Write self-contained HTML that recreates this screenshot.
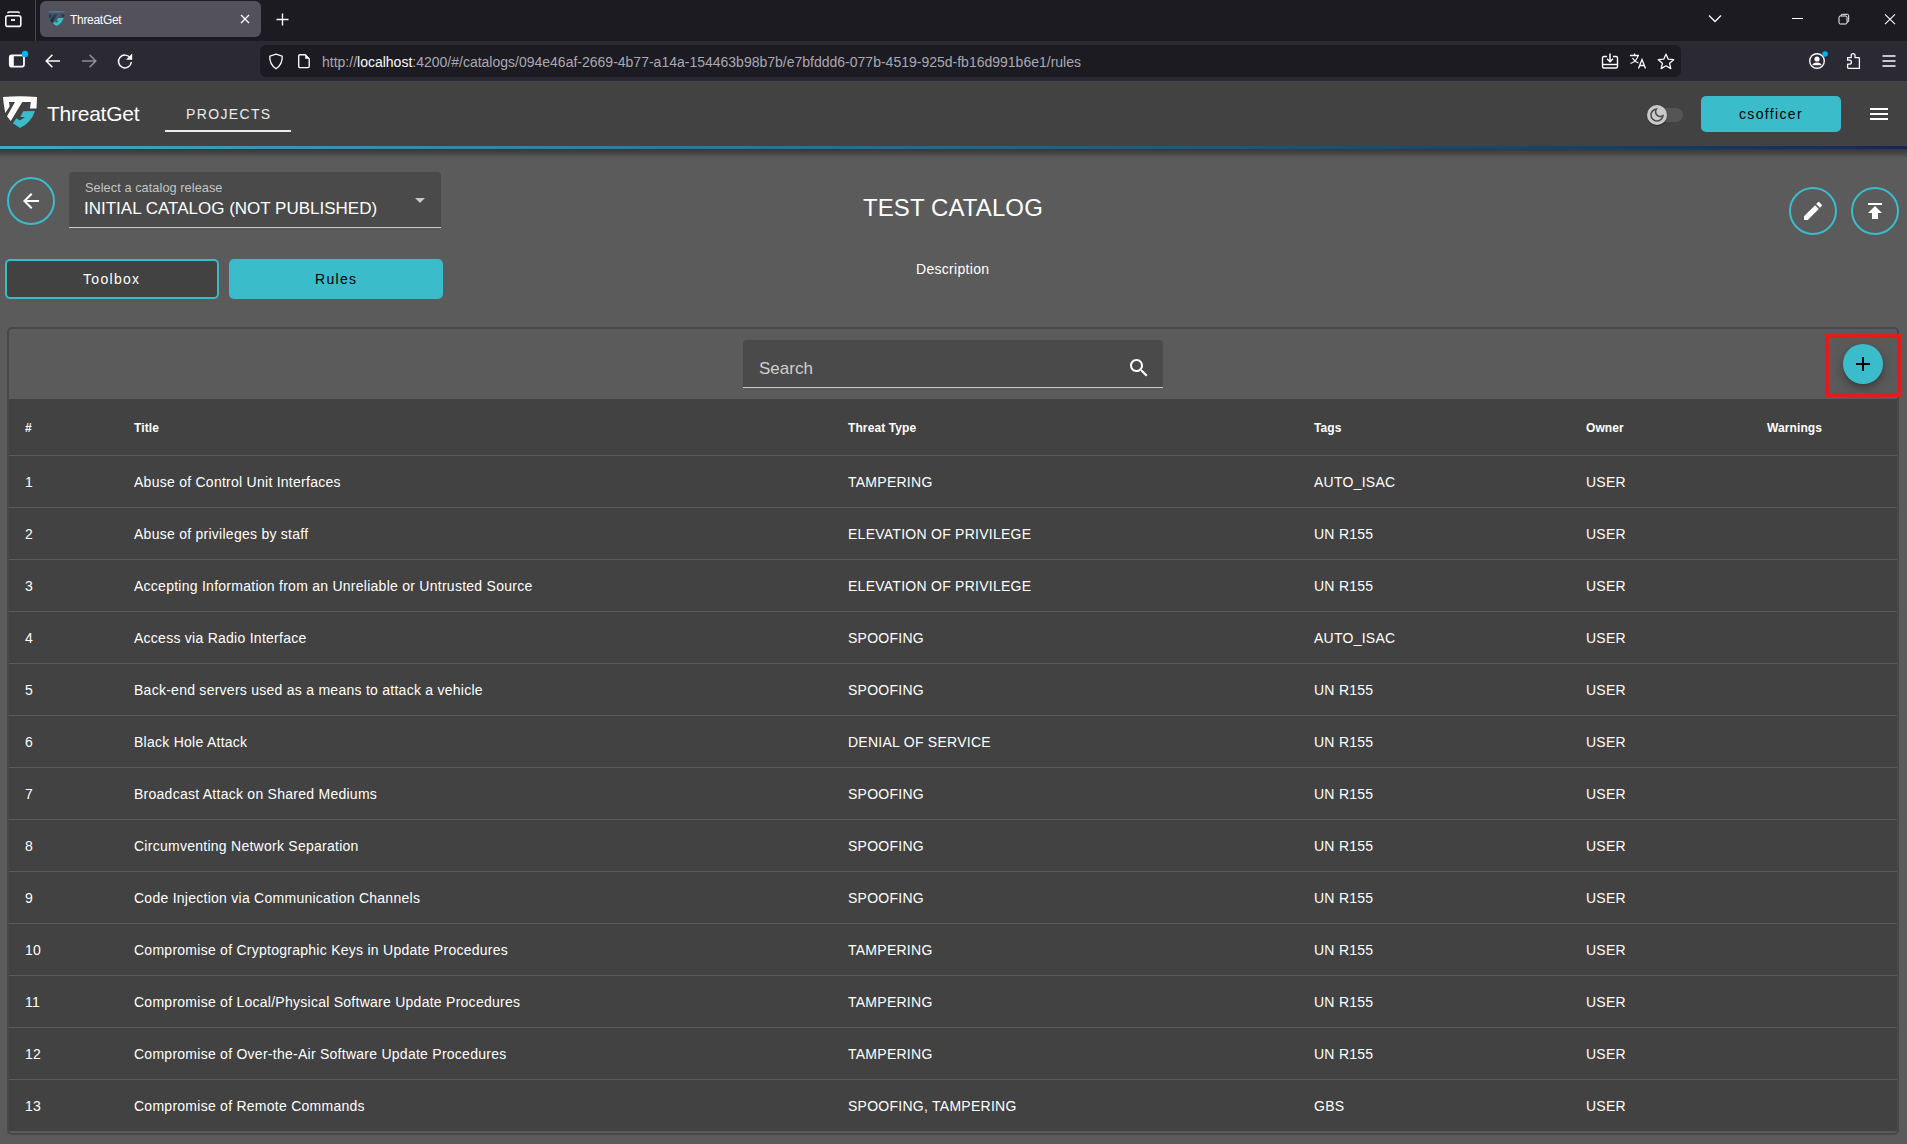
<!DOCTYPE html>
<html><head><meta charset="utf-8">
<style>
*{box-sizing:border-box;margin:0;padding:0}
html,body{width:1907px;height:1144px;overflow:hidden;background:#5b5b5b;font-family:"Liberation Sans",sans-serif;color:#fff}
.abs{position:absolute}
.t{position:absolute;white-space:pre;line-height:1}
svg{position:absolute;overflow:visible}
#tabs{left:0;top:0;width:1907px;height:41px;background:#1c1b22}
#toolbar{left:0;top:41px;width:1907px;height:40px;background:#2b2a33}
#appbar{left:0;top:81px;width:1907px;height:65px;background:#424242}
#gline{left:0;top:146px;width:1907px;height:3px;background:linear-gradient(90deg,#3aabc6,#276782 50%,#152b48)}
#gshadow{left:0;top:149px;width:1907px;height:9px;background:linear-gradient(#363636,#5b5b5b)}
.cbtn{position:absolute;width:48px;height:48px;border:2px solid #3bbccb;border-radius:50%}
#card{left:7px;top:327px;width:1892px;height:808px;border:2px solid #484848;border-radius:5px;overflow:hidden}
#thead{left:0;top:70px;width:1888px;height:57px;background:#424242;border-bottom:1px solid #5a5a5a}
.row{position:absolute;left:0;width:1888px;height:52px;background:#424242;border-bottom:1px solid #5a5a5a;font-size:14px;letter-spacing:0.26px}
.row span,#thead span{position:absolute;white-space:pre;line-height:1;top:19px}
#thead span{font-size:12px;font-weight:bold;top:23px;letter-spacing:0.1px}
.c0{left:16px}.c1{left:125px}.c2{left:839px}.c3{left:1305px}.c4{left:1577px}.c5{left:1758px}
</style></head><body>
<div id="tabs" class="abs"></div>
<div id="toolbar" class="abs"></div>
<div id="appbar" class="abs"></div>
<div id="gline" class="abs"></div>
<div id="gshadow" class="abs"></div>
<!-- tab strip -->
<svg style="left:0;top:0" width="36" height="41" viewBox="0 0 36 41"><g fill="none" stroke="#fbfbfe" stroke-width="1.6"><path d="M7.8 13.2 Q7.8 12 9 12 H18 Q19.2 12 19.2 13.2"/><rect x="5.8" y="15.8" width="15" height="10.6" rx="2"/><path d="M11 20h4" stroke-width="1.8"/></g></svg>
<div class="abs" style="left:35px;top:0;width:1px;height:41px;background:#4b4a52"></div>
<div class="abs" style="left:40px;top:1px;width:221px;height:36px;background:#52515c;border-radius:6px"></div>
<svg style="left:46.6px;top:9.2px" width="19" height="19" viewBox="0 0 40 40"><defs><linearGradient id="fg" x1="0" y1="0" x2="0" y2="1"><stop offset="0" stop-color="#6b7f94"/><stop offset=".35" stop-color="#1f3d5c"/><stop offset="1" stop-color="#10283f"/></linearGradient></defs><path fill="url(#fg)" d="M3 5 Q20 3.3 37 5 L36.5 16.5 L30 16.5 L30.8 10 L22.3 10 L10.8 29 L7 24.3 L15 10 L9 10 L9.6 14.5 L5.3 21 Q3.5 12 3 5Z"/><path fill="#3bbccb" d="M23.3 19.2 L35 19 Q31 31 20 36 L13 31.3 L16.3 26.3 L19.8 28.6 L25 25.3 L20.3 24.8Z"/></svg>
<div class="t" style="left:70px;top:14px;font-size:12px;letter-spacing:-0.3px;color:#fbfbfe">ThreatGet</div>
<svg style="left:240px;top:14px" width="10" height="10" viewBox="0 0 10 10"><path d="M1 1L9 9M9 1L1 9" stroke="#fbfbfe" stroke-width="1.4"/></svg>
<svg style="left:276px;top:13px" width="13" height="13" viewBox="0 0 13 13"><path d="M6.5 0.5v12M0.5 6.5h12" stroke="#fbfbfe" stroke-width="1.4"/></svg>
<svg style="left:1708px;top:14px" width="14" height="9" viewBox="0 0 14 9"><path d="M1 1.5l6 6 6-6" fill="none" stroke="#fbfbfe" stroke-width="1.3"/></svg>
<div class="abs" style="left:1792px;top:18px;width:11px;height:1px;background:#fbfbfe"></div>
<svg style="left:1838px;top:13px" width="12" height="12" viewBox="0 0 12 12"><g fill="none" stroke="#fbfbfe" stroke-width="1"><rect x="1" y="3" width="8" height="8" rx="1.3"/><path d="M3 3 V2.6 Q3 1.3 4.3 1.3 H9.4 Q10.7 1.3 10.7 2.6 V7.7 Q10.7 9 9.4 9 H9"/></g></svg>
<svg style="left:1884px;top:14px" width="12" height="11" viewBox="0 0 12 11"><path d="M1 0.3L11 10.2M11 0.3L1 10.2" stroke="#fbfbfe" stroke-width="1.1"/></svg>
<!-- toolbar -->
<svg style="left:8px;top:50px" width="22" height="20" viewBox="0 0 22 20"><rect x="1.8" y="5.4" width="14.2" height="11.2" rx="2" fill="none" stroke="#fbfbfe" stroke-width="1.8"/><rect x="1.4" y="5" width="4.4" height="12" rx="1.5" fill="#fbfbfe"/><circle cx="17" cy="4" r="3.2" fill="#00b3f4"/></svg>
<svg style="left:45px;top:53px" width="16" height="16" viewBox="0 0 16 16"><path d="M15 8H1.6M7.4 1.8L1.2 8l6.2 6.2" fill="none" stroke="#fbfbfe" stroke-width="1.5"/></svg>
<svg style="left:81px;top:53px" width="16" height="16" viewBox="0 0 16 16"><path d="M1 8h13.4M8.6 1.8L14.8 8l-6.2 6.2" fill="none" stroke="#8f8f9d" stroke-width="1.5"/></svg>
<svg style="left:117px;top:53px" width="16" height="16" viewBox="0 0 16 16"><path d="M13.4 5.2A6.4 6.4 0 1 0 14.3 9" fill="none" stroke="#fbfbfe" stroke-width="1.5"/><path d="M15.2 0.6V6.8H9Z" fill="#fbfbfe"/></svg>
<div class="abs" style="left:260px;top:45px;width:1421px;height:32px;background:#1c1b22;border-radius:6px"></div>
<svg style="left:268px;top:53px" width="16" height="17" viewBox="0 0 16 17"><path d="M8 1.2 L14.2 3.2 Q14.6 11.2 8 15.8 Q1.4 11.2 1.8 3.2Z" fill="none" stroke="#fbfbfe" stroke-width="1.3"/></svg>
<svg style="left:297px;top:53px" width="14" height="16" viewBox="0 0 14 16"><path d="M3 1.7h5.2l4 4v7.6q0 1.3-1.3 1.3H3Q1.7 14.6 1.7 13.3V3Q1.7 1.7 3 1.7z" fill="none" stroke="#fbfbfe" stroke-width="1.35"/><path d="M8.2 1.2V5.7H12.7Z" fill="#fbfbfe"/></svg>
<div class="t" style="left:322px;top:55px;font-size:14px;color:#a9a9b3">http://<span style="color:#fbfbfe">localhost</span>:4200/#/catalogs/094e46af-2669-4b77-a14a-154463b98b7b/e7bfddd6-077b-4519-925d-fb16d991b6e1/rules</div>
<svg style="left:1601px;top:53px" width="18" height="16" viewBox="0 0 18 16"><path d="M6 3.5H3Q1.5 3.5 1.5 5v8.5Q1.5 15 3 15h12q1.5 0 1.5-1.5V5Q16.5 3.5 15 3.5h-3" fill="none" stroke="#fbfbfe" stroke-width="1.4"/><path d="M1.5 11.5h15" stroke="#fbfbfe" stroke-width="1.4"/><path d="M9 0.5v8M6 5.8l3 3 3-3" fill="none" stroke="#fbfbfe" stroke-width="1.5"/></svg>
<svg style="left:1629px;top:53px" width="18" height="16" viewBox="0 0 18 16"><path d="M1 2.5h9M5.5 0.5v2M9 2.5Q8 8 1.5 10.5M3.5 5Q6 9 9.5 10" fill="none" stroke="#fbfbfe" stroke-width="1.3"/><path d="M9.5 15.5L13 6.5l3.5 9M10.7 12.5h4.6" fill="none" stroke="#fbfbfe" stroke-width="1.3"/></svg>
<svg style="left:1657px;top:53px" width="18" height="17" viewBox="0 0 18 17"><path d="M9 1.2l2.3 5 5.4.5-4.1 3.6 1.2 5.3L9 12.8l-4.8 2.8 1.2-5.3L1.3 6.7l5.4-.5z" fill="none" stroke="#fbfbfe" stroke-width="1.3" stroke-linejoin="round"/></svg>
<svg style="left:1808px;top:50px" width="22" height="20" viewBox="0 0 22 20"><circle cx="9" cy="11" r="7.3" fill="none" stroke="#fbfbfe" stroke-width="1.4"/><circle cx="9" cy="9" r="2.6" fill="#fbfbfe"/><path d="M4.3 15.3Q5 12.6 9 12.6T13.7 15.3Z" fill="#fbfbfe"/><circle cx="17" cy="4" r="2.8" fill="#00b3f4"/></svg>
<svg style="left:1845px;top:52px" width="17" height="18" viewBox="0 0 17 18"><path d="M2.6 5.6H6.2V3.6A1.9 1.9 0 0 1 10 3.6V5.6H13.6Q14.4 5.6 14.4 6.4V16.4H3.4Q2.6 16.4 2.6 15.6V12.2H4.4A2 2 0 0 0 4.4 8.2H2.6Z" fill="none" stroke="#fbfbfe" stroke-width="1.3" stroke-linejoin="round"/></svg>
<svg style="left:1882px;top:55px" width="14" height="12" viewBox="0 0 14 12"><path d="M0.5 1h13M0.5 6h13M0.5 11h13" stroke="#fbfbfe" stroke-width="1.4"/></svg>
<!-- app bar -->
<svg style="left:0;top:92px" width="40" height="40" viewBox="0 0 40 40"><path fill="#fff" d="M3 5 Q20 3.3 37 5 L36.5 16.5 L30 16.5 L30.8 10 L22.3 10 L10.8 29 L7 24.3 L15 10 L9 10 L9.6 14.5 L5.3 21 Q3.5 12 3 5Z"/><path fill="#3bbccb" d="M23.3 19.2 L35 19 Q31 31 20 36 L13 31.3 L16.3 26.3 L19.8 28.6 L25 25.3 L20.3 24.8Z"/></svg>
<div class="t" style="left:47px;top:103px;font-size:21px;letter-spacing:-0.25px;color:#fff">ThreatGet</div>
<div class="t" style="left:186px;top:107px;font-size:14px;letter-spacing:1.35px;color:#ececec">PROJECTS</div>
<div class="abs" style="left:165px;top:130px;width:126px;height:2px;background:#ececec"></div>
<div class="abs" style="left:1650px;top:108px;width:33px;height:14px;border-radius:7px;background:#555"></div>
<div class="abs" style="left:1647px;top:105px;width:20px;height:20px;border-radius:50%;background:#c9c9c9;box-shadow:0 2px 1px -1px rgba(0,0,0,.2),0 1px 1px 0 rgba(0,0,0,.14),0 1px 3px 0 rgba(0,0,0,.12)"></div>
<svg style="left:1648px;top:106px" width="18" height="18" viewBox="0 0 24 24"><path fill="#4a4a4a" d="M9.37 5.51c-.18.64-.27 1.310-.27 1.99 0 4.08 3.32 7.4 7.4 7.4.68 0 1.35-.09 1.99-.27C17.45 17.19 14.93 19 12 19c-3.86 0-7-3.14-7-7 0-2.930 1.81-5.45 4.37-6.49zM12 3c-4.97 0-9 4.03-9 9s4.03 9 9 9 9-4.03 9-9c0-.46-.04-.92-.1-1.36-.98 1.37-2.58 2.26-4.4 2.26-2.98 0-5.4-2.42-5.4-5.4 0-1.810.89-3.42 2.26-4.4-.44-.06-.9-.1-1.36-.1z"/></svg>
<div class="abs" style="left:1701px;top:96px;width:140px;height:36px;border-radius:5px;background:#3bbccb"></div>
<div class="t" style="left:1739px;top:107px;font-size:14px;letter-spacing:1.35px;color:#000">csofficer</div>
<svg style="left:1867px;top:102px" width="24" height="24" viewBox="0 0 24 24"><path fill="#fff" d="M3 18h18v-2H3v2zm0-5h18v-2H3v2zm0-7v2h18V6H3z"/></svg>

<!-- page header -->
<div class="cbtn" style="left:7px;top:177px"></div>
<svg style="left:19px;top:189px" width="24" height="24" viewBox="0 0 24 24"><path fill="#fff" d="M20 11H7.83l5.59-5.59L12 4l-8 8 8 8 1.41-1.41L7.83 13H20v-2z"/></svg>
<div class="abs" style="left:69px;top:172px;width:372px;height:56px;background:#4a4a4a;border-radius:4px 4px 0 0;border-bottom:1px solid #c8c8c8"></div>
<div class="t" style="left:85px;top:182px;font-size:12.75px;letter-spacing:0.06px;color:#c4c4c4">Select a catalog release</div>
<div class="t" style="left:84px;top:200px;font-size:17px;color:#fff">INITIAL CATALOG (NOT PUBLISHED)</div>
<div class="abs" style="left:415px;top:198px;width:0;height:0;border-left:5px solid transparent;border-right:5px solid transparent;border-top:5px solid #c8c8c8"></div>
<div class="t" style="left:863px;top:196px;font-size:24px;letter-spacing:0.1px">TEST CATALOG</div>
<div class="t" style="left:916px;top:262px;font-size:14px;letter-spacing:0.3px">Description</div>
<div class="cbtn" style="left:1789px;top:187px"></div>
<svg style="left:1801px;top:199px" width="24" height="24" viewBox="0 0 24 24"><path fill="#fff" d="M3 17.25V21h3.75L17.81 9.94l-3.75-3.75L3 17.25zM20.71 7.04c.39-.39.39-1.02 0-1.41l-2.34-2.34c-.39-.39-1.02-.39-1.41 0l-1.83 1.83 3.75 3.75 1.83-1.83z"/></svg>
<div class="cbtn" style="left:1851px;top:187px"></div>
<svg style="left:1863px;top:199px" width="24" height="24" viewBox="0 0 24 24"><path fill="#fff" d="M5 4v2h14V4H5zm0 10h4v6h6v-6h4l-7-7-7 7z"/></svg>
<div class="abs" style="left:5px;top:259px;width:214px;height:40px;border:2px solid #3bbccb;border-radius:5px;background:#424242"></div>
<div class="t" style="left:83px;top:272px;font-size:14px;letter-spacing:1.3px">Toolbox</div>
<div class="abs" style="left:229px;top:259px;width:214px;height:40px;border-radius:5px;background:#3bbccb"></div>
<div class="t" style="left:315px;top:272px;font-size:14px;letter-spacing:1.3px;color:#000">Rules</div>

<!-- card -->
<div id="card" class="abs">
<div id="thead" class="abs"><span class="c0">#</span><span class="c1">Title</span><span class="c2">Threat Type</span><span class="c3">Tags</span><span class="c4">Owner</span><span class="c5">Warnings</span></div>
<div class="row" style="top:127px"><span class="c0">1</span><span class="c1">Abuse of Control Unit Interfaces</span><span class="c2">TAMPERING</span><span class="c3">AUTO_ISAC</span><span class="c4">USER</span></div>
<div class="row" style="top:179px"><span class="c0">2</span><span class="c1">Abuse of privileges by staff</span><span class="c2">ELEVATION OF PRIVILEGE</span><span class="c3">UN R155</span><span class="c4">USER</span></div>
<div class="row" style="top:231px"><span class="c0">3</span><span class="c1">Accepting Information from an Unreliable or Untrusted Source</span><span class="c2">ELEVATION OF PRIVILEGE</span><span class="c3">UN R155</span><span class="c4">USER</span></div>
<div class="row" style="top:283px"><span class="c0">4</span><span class="c1">Access via Radio Interface</span><span class="c2">SPOOFING</span><span class="c3">AUTO_ISAC</span><span class="c4">USER</span></div>
<div class="row" style="top:335px"><span class="c0">5</span><span class="c1">Back-end servers used as a means to attack a vehicle</span><span class="c2">SPOOFING</span><span class="c3">UN R155</span><span class="c4">USER</span></div>
<div class="row" style="top:387px"><span class="c0">6</span><span class="c1">Black Hole Attack</span><span class="c2">DENIAL OF SERVICE</span><span class="c3">UN R155</span><span class="c4">USER</span></div>
<div class="row" style="top:439px"><span class="c0">7</span><span class="c1">Broadcast Attack on Shared Mediums</span><span class="c2">SPOOFING</span><span class="c3">UN R155</span><span class="c4">USER</span></div>
<div class="row" style="top:491px"><span class="c0">8</span><span class="c1">Circumventing Network Separation</span><span class="c2">SPOOFING</span><span class="c3">UN R155</span><span class="c4">USER</span></div>
<div class="row" style="top:543px"><span class="c0">9</span><span class="c1">Code Injection via Communication Channels</span><span class="c2">SPOOFING</span><span class="c3">UN R155</span><span class="c4">USER</span></div>
<div class="row" style="top:595px"><span class="c0">10</span><span class="c1">Compromise of Cryptographic Keys in Update Procedures</span><span class="c2">TAMPERING</span><span class="c3">UN R155</span><span class="c4">USER</span></div>
<div class="row" style="top:647px"><span class="c0">11</span><span class="c1">Compromise of Local/Physical Software Update Procedures</span><span class="c2">TAMPERING</span><span class="c3">UN R155</span><span class="c4">USER</span></div>
<div class="row" style="top:699px"><span class="c0">12</span><span class="c1">Compromise of Over-the-Air Software Update Procedures</span><span class="c2">TAMPERING</span><span class="c3">UN R155</span><span class="c4">USER</span></div>
<div class="row" style="top:751px"><span class="c0">13</span><span class="c1">Compromise of Remote Commands</span><span class="c2">SPOOFING, TAMPERING</span><span class="c3">GBS</span><span class="c4">USER</span></div>
</div>
<!-- search -->
<div class="abs" style="left:743px;top:340px;width:420px;height:48px;background:#4a4a4a;border-radius:4px 4px 0 0;border-bottom:1px solid #c8c8c8"></div>
<div class="t" style="left:759px;top:360px;font-size:17px;color:#cfcfcf">Search</div>
<svg style="left:1127px;top:356px" width="24" height="24" viewBox="0 0 24 24"><path fill="#fff" d="M15.5 14h-.79l-.28-.27C15.41 12.590 16 11.11 16 9.5 16 5.91 13.09 3 9.5 3S3 5.91 3 9.5 5.91 16 9.5 16c1.61 0 3.090-.59 4.23-1.57l.27.28v.79l5 4.99L20.490 19l-4.990-5zm-6 0C7.01 14 5 11.99 5 9.5S7.01 5 9.5 5 14 7.01 14 9.5 11.99 14 9.5 14z"/></svg>
<!-- fab -->
<div class="abs" style="left:1843px;top:344px;width:40px;height:40px;border-radius:50%;background:#3bbccb;box-shadow:0 3px 5px -1px rgba(0,0,0,.2),0 6px 10px 0 rgba(0,0,0,.14),0 1px 18px 0 rgba(0,0,0,.12)"></div>
<svg style="left:1851px;top:352px" width="24" height="24" viewBox="0 0 24 24"><path fill="#000" d="M19 13h-6v6h-2v-6H5v-2h6V5h2v6h6v2z"/></svg>
<div class="abs" style="left:1825px;top:334px;width:76px;height:63px;border:4px solid #e41b1b"></div>
</body></html>
